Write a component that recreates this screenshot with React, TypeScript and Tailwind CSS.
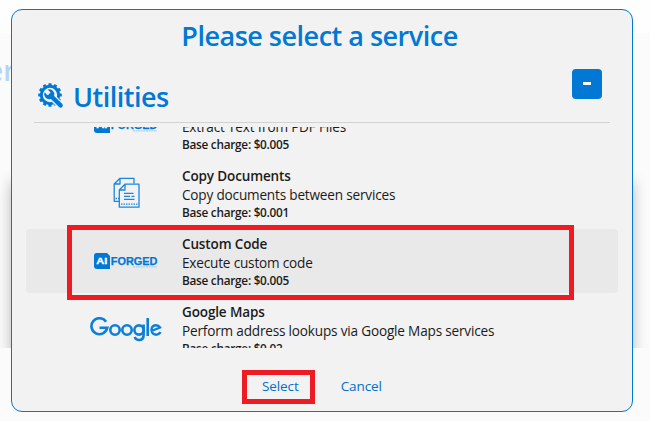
import React from "react";

const teeth = Array.from({ length: 12 }, (_, i) => i * 30);

function GearWrench() {
  return (
    <svg width="26" height="26" viewBox="0 0 26 26" className="mt-[11px] shrink-0">
      <circle cx="12" cy="12" r="8.7" fill="none" stroke="#0078d4" strokeWidth="3" />
      {teeth.map((a) => (
        <rect key={a} x="10.4" y="0.2" width="3.2" height="3.4" rx="0.5" fill="#0078d4" transform={`rotate(${a} 12 12)`} />
      ))}
      <path d="M14 14L24 24" stroke="#f2f2f2" strokeWidth="7" />
      <path d="M12.5 12.5L22.6 22.4" stroke="#0078d4" strokeWidth="4.4" strokeLinecap="round" />
      <path d="M6.6 9.2L9.6 12.2L12 11.6L12.4 9.2L9.6 6.5A5 5 0 0 1 16.2 12.2L12.6 16A5 5 0 0 1 6.6 9.2Z" fill="#0078d4" />
    </svg>
  );
}

function ForgedLogo() {
  return (
    <svg width="66" height="18" viewBox="0 0 66 18">
      <path d="M3.5 1H14L17 4V17H4Q1 17 1 14V4Q1 1 3.5 1Z" fill="#0078d4" />
      <text x="3.2" y="12.2" fontSize="8.6" fontWeight="700" textLength="11" lengthAdjust="spacingAndGlyphs" fill="#fff" stroke="#fff" strokeWidth="0.3" fontFamily="Liberation Sans, sans-serif">AI</text>
      <text x="17.8" y="12.5" fontSize="10" fontWeight="700" textLength="46.7" lengthAdjust="spacingAndGlyphs" fill="#0078d4" stroke="#0078d4" strokeWidth="0.25" fontFamily="Liberation Sans, sans-serif">FORGED</text>
      <path d="M40 14.8H64" stroke="#a5d0f1" strokeWidth="1.3" strokeDasharray="2 .6" />
    </svg>
  );
}

function DocsIcon() {
  return (
    <svg width="28" height="32" viewBox="0 0 28 32" fill="none" stroke="#1c86da" strokeWidth="1.3" strokeLinejoin="round" className="ml-[2px]">
      <path d="M6 24.3H1.2V7L7 1.3H21V6.5M1.2 7H7V1.3" />
      <path d="M6.3 13L12 7.2H26V30.2H6.3ZM6.3 13H12V7.2" />
      <path d="M11 16.3H20.5M11 19.4H17M18.5 19.4H21.5M11 22.4H21.5" />
      <path d="M8 27.2H25M2.5 21.5H6" strokeDasharray="1.5 1" />
    </svg>
  );
}

function GoogleLogo() {
  return (
    <svg width="72" height="28" viewBox="0 0 72 28" fill="none" stroke="#0c7fd8" strokeWidth="2.6" className="relative top-[2px]">
      <path d="M16.1 4.7A8 8 0 1 0 17.3 10.8H9.5" />
      <circle cx="25" cy="13" r="4.7" />
      <circle cx="37" cy="13" r="4.7" />
      <circle cx="49" cy="13" r="4.6" />
      <path d="M53.6 7.5V18Q53.6 23 49 23Q46 23 44.6 20" />
      <path d="M57.7 1V19" />
      <path d="M61.5 14L70 10.5Q68.5 8.2 65.8 8.3Q61.5 8.8 61.5 13Q61.8 17.5 66 17.7Q69 17.6 70.5 15" strokeWidth="2.4" />
    </svg>
  );
}

type Service = { name: string; text: string; charge: string; logo: React.ReactNode; selected?: boolean };

const services: Service[] = [
  { name: "PDF Text", text: "Extract Text from PDF Files", charge: "$0.005", logo: <ForgedLogo /> },
  { name: "Copy Documents", text: "Copy documents between services", charge: "$0.001", logo: <DocsIcon /> },
  { name: "Custom Code", text: "Execute custom code", charge: "$0.005", logo: <ForgedLogo />, selected: true },
  { name: "Google Maps", text: "Perform address lookups via Google Maps services", charge: "$0.02", logo: <GoogleLogo /> },
];

function ServiceRow({ s }: { s: Service }) {
  return (
    <div className={`flex h-16 shrink-0 items-center rounded ${s.selected ? "bg-[#e9e9e9]" : ""}`}>
      <div className="ml-[60px] flex w-20 justify-center">{s.logo}</div>
      <div className="ml-4 pt-px whitespace-nowrap text-[#1b1b1b]">
        <div className="h-[18px] text-[13.5px] leading-[19px] font-semibold tracking-[-0.13px]">{s.name}</div>
        <div className="h-[19px] text-[13.6px] leading-[19px] tracking-[-0.19px]">{s.text}</div>
        <div className="h-[17px] text-[11.8px] leading-[16px] font-semibold tracking-[-0.27px]">Base charge: {s.charge}</div>
      </div>
    </div>
  );
}

export default function App() {
  return (
    <div className="relative h-[421px] w-[650px] overflow-hidden bg-[#fbfbfb] pt-[9px] pl-[11px] font-['Open_Sans',sans-serif]">
      <div className="absolute inset-x-0 top-0 h-[33px] bg-[#fefefe]" />
      <div className="absolute top-[51px] -left-[13px] text-[28px] leading-[38px] font-semibold text-[#b3d7f2]">er</div>
      <div className="absolute top-[160px] left-0 h-[188px] w-full overflow-hidden">
        <div className="absolute top-[22px] left-[12px] h-[240px] w-[620px] shadow-[0_0_14px_rgba(0,0,0,0.3)]" />
      </div>
      <div className="relative flex h-[403px] w-[622px] flex-col rounded-[11px] border border-[#0078d4] bg-[#f2f2f2] px-[14px]">
        <h1 className="mt-[7px] pr-[5px] text-center text-[27px] leading-[38px] font-semibold tracking-[-0.5px] text-[#0078d4]">Please select a service</h1>
        <div className="mx-2 mt-[3px] flex h-[65px] items-center border-b border-[#d2d2d2] pl-1">
          <GearWrench />
          <h2 className="mt-[13px] ml-[9px] text-[27px] leading-[38px] font-semibold tracking-[-0.5px] text-[#0078d4]">Utilities</h2>
          <button className="mr-2 mb-[13px] ml-auto flex size-[30px] items-center justify-center rounded bg-[#0078d4]">
            <span className="h-[3px] w-2 bg-white" />
          </button>
        </div>
        <div className="mt-1 h-[221px] overflow-hidden">
          <div className="-mt-[34px] flex flex-col gap-1">
            {services.map((s) => <ServiceRow key={s.name} s={s} />)}
          </div>
        </div>
        <div className="mt-[28px] flex gap-[42px] pl-[236px] text-[13.5px] leading-5 tracking-[-0.1px] text-[#0070c9]">
          <button>Select</button>
          <button>Cancel</button>
        </div>
      </div>
      <div className="absolute top-[225px] left-[67px] h-[75px] w-[507px] border-[5px] border-[#ed1c24]" />
      <div className="absolute top-[370px] left-[242px] h-[34px] w-[73px] border-[5px] border-[#ed1c24]" />
    </div>
  );
}
